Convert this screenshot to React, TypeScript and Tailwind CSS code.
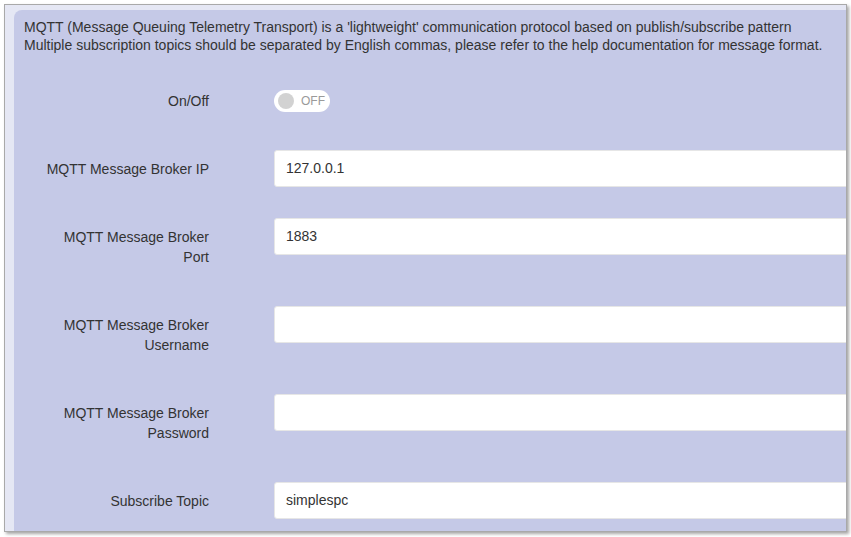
import React from "react";

interface Field {
  label: string[];
  value: string;
}

const fields: Field[] = [
  { label: ["MQTT Message Broker IP"], value: "127.0.0.1" },
  { label: ["MQTT Message Broker", "Port"], value: "1883" },
  { label: ["MQTT Message Broker", "Username"], value: "" },
  { label: ["MQTT Message Broker", "Password"], value: "" },
  { label: ["Subscribe Topic"], value: "simplespc" },
];

const Label: React.FC<{ lines: string[] }> = ({ lines }) => (
  <div className="w-[185px] shrink-0 pl-[19px] py-[9px] text-right leading-[20px]">
    {lines.map((l) => (
      <div key={l}>{l}</div>
    ))}
  </div>
);

const App: React.FC = () => {
  return (
    <div className="w-[851px] h-[537px] bg-white pt-[4px] pl-[4px] font-['Liberation_Sans',Arial,sans-serif] text-[14px] text-[#333]">
      <div className="w-[843px] h-[528px] border border-[#a9a9a9] shadow-[2px_2px_3px_rgba(0,0,0,0.35)] bg-[#e5e7f4] pt-[5px] pl-[9px] overflow-hidden flex">
        <div className="flex-1 bg-[#c5c9e7] rounded-tl-lg pt-[8px] px-[10px] overflow-hidden">
          <div className="leading-[18px] whitespace-nowrap">
            <div>
              MQTT (Message Queuing Telemetry Transport) is a 'lightweight' communication protocol based on publish/subscribe pattern
            </div>
            <div>
              Multiple subscription topics should be separated by English commas, please refer to the help documentation for message format.
            </div>
          </div>

          <div className="mt-[28px] flex mb-[30px]">
            <Label lines={["On/Off"]} />
            <div className="ml-[65px] flex items-center">
              <div className="w-[56px] h-[22px] rounded-full bg-white flex items-center px-[4px] gap-[7px]">
                <div className="w-[16px] h-[16px] rounded-full bg-[#d2d2d2]" />
                <span className="text-[12px] text-[#9a9a9a]">OFF</span>
              </div>
            </div>
          </div>

          {fields.map((f) => (
            <div key={f.label.join(" ")} className="flex mb-[30px]">
              <Label lines={f.label} />
              <div className="ml-[65px] shrink-0 w-[700px] h-[37px] bg-white border border-[#e6e6e6] rounded-[3px] px-[11px] flex items-center">
                {f.value}
              </div>
            </div>
          ))}
        </div>
      </div>
    </div>
  );
};

export default App;
